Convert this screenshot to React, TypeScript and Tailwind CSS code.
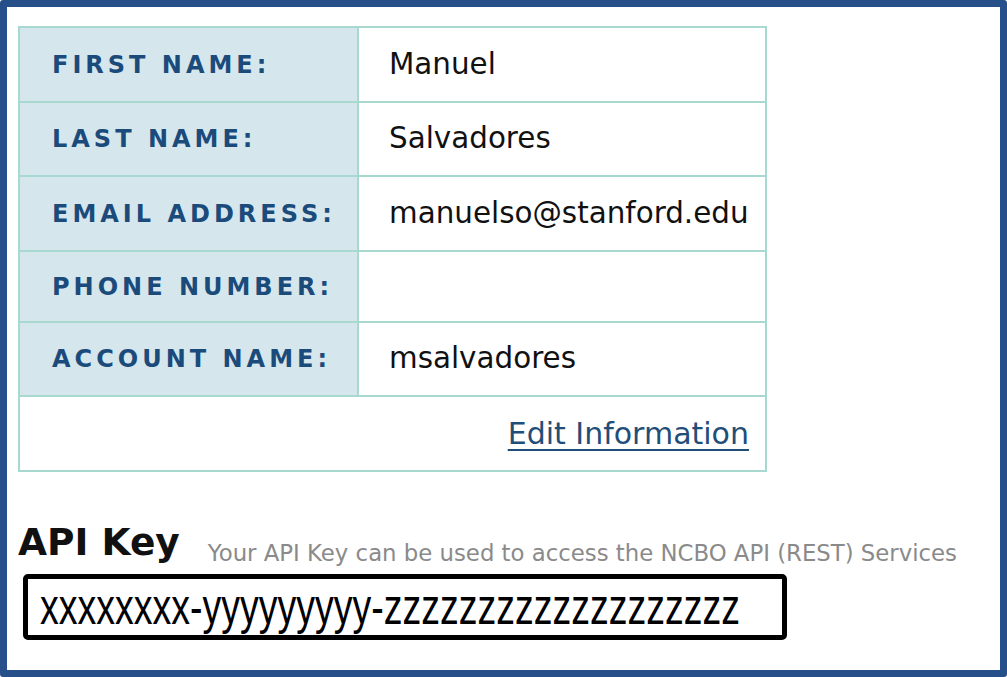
import React from 'react'

interface Field {
  label: string
  value: string
  h: string
}

const fields: Field[] = [
  { label: 'First Name:', value: 'Manuel', h: 'h-[75px]' },
  { label: 'Last Name:', value: 'Salvadores', h: 'h-[74px]' },
  { label: 'Email Address:', value: 'manuelso@stanford.edu', h: 'h-[75px]' },
  { label: 'Phone Number:', value: '', h: 'h-[71px]' },
  { label: 'Account Name:', value: 'msalvadores', h: 'h-[74px]' },
]

export default function App(){
  return (
    <div className="w-[1007px] h-[677px] box-border border-[7px] border-[#27508a] rounded-[3px] bg-white pl-[11px] pt-[19px] overflow-hidden font-['DejaVu_Sans',sans-serif]">
      {/* Account table */}
      <div className="w-[749px] border-2 border-[#a8d9d1]">
        {fields.map(f => (
          <div key={f.label} className={`flex border-b-2 border-[#a8d9d1] ${f.h}`}>
            <div className="w-[339px] shrink-0 border-r-2 border-[#a8d9d1] bg-[#d6e6ed] flex items-center pl-[32px]">
              <span className="uppercase font-bold text-[24px] tracking-[4px] text-[#1b4b7a] leading-none">{f.label}</span>
            </div>
            <div className="flex-1 flex items-center pl-[30px] text-[29.4px] text-[#111] leading-none">
              {f.value}
            </div>
          </div>
        ))}
        <div className="h-[73px] flex items-center justify-end pr-[16px]">
          <a href="#" className="text-[30px] leading-none text-[#1f4e79] underline decoration-2 underline-offset-[5px]">Edit Information</a>
        </div>
      </div>

      {/* API key */}
      <div className="mt-[52px] flex items-baseline">
        <h2 className="text-[37.5px] font-bold leading-[37px] text-[#111]">API Key</h2>
        <span className="ml-[28px] text-[22.8px] text-[#8a8a8a] translate-y-[6px]">Your API Key can be used to access the NCBO API (REST) Services</span>
      </div>
      <div className="mt-[10px] ml-[5px] w-[764px] h-[66px] box-border border-[5px] border-black rounded-[5px] flex items-center pl-[12px] overflow-hidden">
        <span className="font-['Liberation_Sans',Arial,sans-serif] text-[50px] leading-none text-black scale-x-[0.75] origin-left whitespace-nowrap">xxxxxxxx-yyyyyyyyy-zzzzzzzzzzzzzzzzzzz</span>
      </div>
    </div>
  )
}
